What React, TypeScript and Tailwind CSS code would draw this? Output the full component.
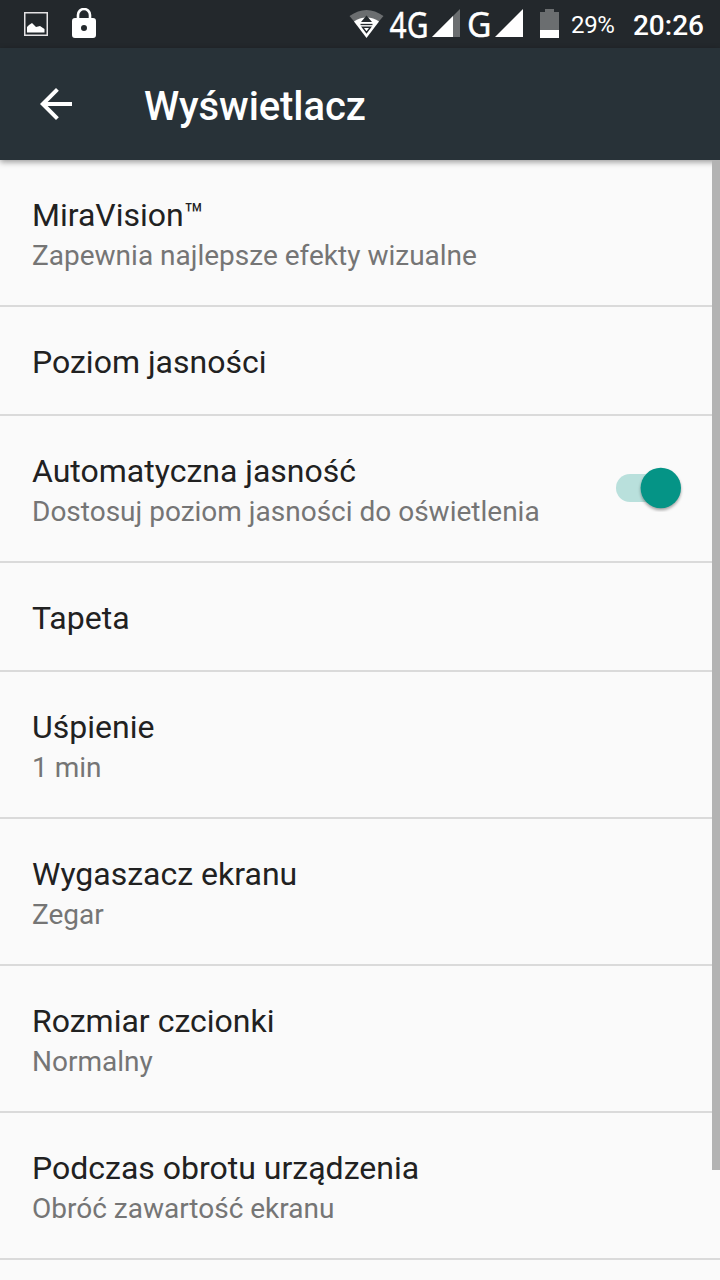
const settings = [
  { title: "MiraVision™", summary: "Zapewnia najlepsze efekty wizualne" },
  { title: "Poziom jasności" },
  { title: "Automatyczna jasność", summary: "Dostosuj poziom jasności do oświetlenia", toggle: true },
  { title: "Tapeta" },
  { title: "Uśpienie", summary: "1 min" },
  { title: "Wygaszacz ekranu", summary: "Zegar" },
  { title: "Rozmiar czcionki", summary: "Normalny" },
  { title: "Podczas obrotu urządzenia", summary: "Obróć zawartość ekranu" },
]

function StatusBar() {
  return (
    <div className="flex h-12 items-start bg-[#23282c] pl-6 pr-4 text-white">
      <svg className="mt-3 h-6 w-6" viewBox="0 0 24 24">
        <rect x="0.75" y="0.75" width="22.5" height="22.5" fill="none" stroke="#e4e2e4" strokeWidth="1.5" />
        <path d="M3 20.500V15L5 13L8 11L12 15L16 14L20.500 17V20.500Z" fill="#fff" />
      </svg>
      <svg className="ml-6 mt-2 h-[31px] w-6" viewBox="0 0 24 31">
        <path d="M6 12V7a6 6 0 0 1 12 0V12" fill="none" stroke="#fff" strokeWidth="2.6" />
        <path
          d="M3 10H21Q24 10 24 13V27Q24 30 21 30H3Q0 30 0 27V13Q0 10 3 10ZM12 17a3 3 0 1 0 0 6a3 3 0 0 0 0-6Z"
          fill="#fff"
          fillRule="evenodd"
        />
      </svg>

      <div className="ml-auto flex items-start">
        {/* Wi-Fi */}
        <svg className="mt-2 h-8 w-[35px]" viewBox="0 0 35 32">
          <path d="M0.500 8Q17.500 -4 34.500 8L29 14.500Q17.500 6 6 14.500Z" fill="#6b6e70" />
          <path d="M5 13.500Q10.500 9.500 17.500 9.500Q24.500 9.500 30 13.500L17.500 30Z" fill="#fff" />
          <path d="M17.500 7.500L23 14H12Z" fill="#23282c" />
          <path d="M11.500 16.500H23.500" stroke="#23282c" strokeWidth="1.300" />
          <path d="M13.500 19.200H21.500L17.500 24.500Z" fill="#fff" stroke="#23282c" strokeWidth="1.400" />
        </svg>
        <svg className="ml-1 h-12 w-[42px] overflow-visible" viewBox="0 0 42 48">
          <text
            x="1.500"
            y="37.500"
            fontSize="36"
            textLength="39"
            lengthAdjust="spacingAndGlyphs"
            fill="#fff"
            stroke="#fff"
            strokeWidth="0.400"
            className="font-['Noto_Sans',sans-serif]"
          >
            4G
          </text>
        </svg>
        <svg className="ml-0.5 mt-[9px] h-[29px] w-7" viewBox="0 0 28 29">
          <path d="M0 28L28 0V28Z" fill="#6b6e70" />
          <path d="M0 28L21 7V28Z" fill="#fff" />
        </svg>
        <svg className="ml-[7px] h-12 w-6 overflow-visible" viewBox="0 0 24 48">
          <text
            x="0"
            y="36.500"
            fontSize="35"
            textLength="24.500"
            lengthAdjust="spacingAndGlyphs"
            fill="#fff"
            stroke="#fff"
            strokeWidth="0.400"
            className="font-['Noto_Sans',sans-serif]"
          >
            G
          </text>
        </svg>
        <svg className="ml-1 mt-[9px] h-[29px] w-7" viewBox="0 0 28 29">
          <path d="M0 28L28 0V28Z" fill="#fff" />
        </svg>
        {/* Battery */}
        <svg className="ml-[17px] mt-[9px] h-[29px] w-[19px]" viewBox="0 0 19 29">
          <path d="M0 3H5V0H14V3H19V29H0Z" fill="#6b6e70" />
          <path d="M0 21H19V29H0Z" fill="#fff" />
        </svg>
        <span className="ml-3 mt-[9px] w-[62px] text-[24px] leading-8 tracking-[-0.3px]">29%</span>
        <span className="mt-2.5 text-[28px] font-medium leading-8">20:26</span>
      </div>
    </div>
  )
}

function Toggle() {
  return (
    <svg className="mt-12 h-12 w-[72px]" viewBox="0 0 72 48">
      <rect x="2" y="10" width="60" height="28" rx="14" fill="#b9e0dc" />
      <circle cx="46.800" cy="24" r="20.200" fill="#059486" className="drop-shadow-[0_2px_1.5px_rgba(0,0,0,0.35)]" />
    </svg>
  )
}

export default function App() {
  return (
    <div className="relative flex h-[1280px] w-[720px] flex-col overflow-hidden bg-[#fafafa] font-[Roboto,sans-serif]">
      <StatusBar />
      <header className="z-10 flex h-28 shrink-0 items-center bg-[#283238] pl-8 text-white shadow-[0_2px_6px_rgba(0,0,0,0.4)]">
        <svg className="h-12 w-12" viewBox="0 0 24 24" fill="#fff">
          <path d="M20 11H7.830l5.590-5.590L12 4l-8 8 8 8 1.410-1.410L7.830 13H20v-2z" />
        </svg>
        <h1 className="ml-16 mt-1.5 text-[40px] font-medium leading-none tracking-[-0.1px]">Wyświetlacz</h1>
      </header>

      <main>
        {settings.map((item) => (
          <div
            key={item.title}
            className={`flex justify-between border-b-2 border-[#dadada] pl-8 pr-[34px] ${
              item.summary ? "h-[147px]" : "h-[109px]"
            }`}
          >
            <div className="pt-9">
              <div className="text-[32px] leading-[38px] text-[#212121]">{item.title}</div>
              {item.summary && <div className="mt-[5px] text-[28px] leading-[33px] text-[#757575]">{item.summary}</div>}
            </div>
            {item.toggle && <Toggle />}
          </div>
        ))}
      </main>

      {/* Scrollbar overlays the list */}
      <div className="absolute right-0 top-[160px] z-10 h-[1010px] w-2 bg-[#b3b3b3]" />
    </div>
  )
}
